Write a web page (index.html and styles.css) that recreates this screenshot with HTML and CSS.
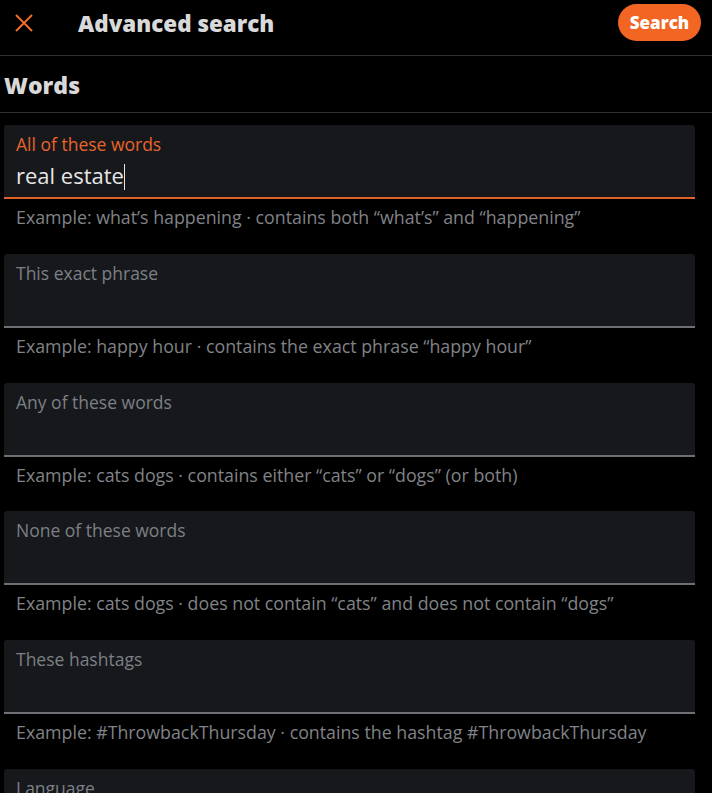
FILE: index.html
```html
<!DOCTYPE html>
<html lang="en">
<head>
    <meta charset="UTF-8">
    <meta name="viewport" content="width=device-width, initial-scale=1.0">
    <title>Advanced search</title>
    <link rel="stylesheet" href="styles.css">
</head>
<body>
<header class="top-bar">
    <button class="close-btn" aria-label="Close">
        <svg width="20" height="20" viewBox="0 0 20 20"><path d="M2 2 L18 18 M18 2 L2 18" stroke="#f26a2e" stroke-width="2" fill="none"/></svg>
    </button>
    <h1 class="title">Advanced search</h1>
    <button class="search-btn">Search</button>
</header>

<h2 class="section-title">Words</h2>

<form class="search-form" onsubmit="event.preventDefault();">
    <div class="field">
        <label class="box active">
            <span class="label">All of these words</span>
            <span class="value">real estate<span class="caret"></span></span>
        </label>
        <p class="hint">Example: what’s happening · contains both “what’s” and “happening”</p>
    </div>

    <div class="field">
        <label class="box">
            <span class="label">This exact phrase</span>
            <input type="text">
        </label>
        <p class="hint">Example: happy hour · contains the exact phrase “happy hour”</p>
    </div>

    <div class="field">
        <label class="box">
            <span class="label">Any of these words</span>
            <input type="text">
        </label>
        <p class="hint">Example: cats dogs · contains either “cats” or “dogs” (or both)</p>
    </div>

    <div class="field">
        <label class="box">
            <span class="label">None of these words</span>
            <input type="text">
        </label>
        <p class="hint">Example: cats dogs · does not contain “cats” and does not contain “dogs”</p>
    </div>

    <div class="field">
        <label class="box">
            <span class="label">These hashtags</span>
            <input type="text">
        </label>
        <p class="hint">Example: #ThrowbackThursday · contains the hashtag #ThrowbackThursday</p>
    </div>

    <div class="field">
        <label class="box">
            <span class="label">Language</span>
            <input type="text">
        </label>
    </div>
</form>
</body>
</html>
```

FILE: styles.css
```css
body {
    margin: 0;
    background: #000;
    color: #e6e6e6;
    font-family: "Open Sans", "Noto Sans", sans-serif;
    overflow: hidden;
}

.top-bar {
    display: flex;
    align-items: center;
    height: 56px;
    border-bottom: 1px solid #2f3033;
    padding: 0 12px 0 12px;
    box-sizing: border-box;
}

.close-btn {
    background: none;
    border: none;
    padding: 0;
    width: 24px;
    height: 24px;
    margin-top: -10px;
    display: flex;
    align-items: center;
    justify-content: center;
    cursor: pointer;
}

.title {
    flex: 1;
    margin: -9px 0 0 42px;
    font-size: 22.4px;
    font-weight: 800;
    color: #d9d9d9;
}

.search-btn {
    background: #f26522;
    color: #fff;
    border: none;
    border-radius: 20px;
    height: 37px;
    width: 83px;
    margin-top: -11px;
    margin-right: -1px;
    font-family: inherit;
    font-size: 17px;
    font-weight: 800;
    cursor: pointer;
}

.section-title {
    margin: 0;
    padding: 13px 4px 0 4px;
    height: 57px;
    box-sizing: border-box;
    border-bottom: 1px solid #2f3033;
    font-size: 23px;
    font-weight: 800;
    color: #d9d9d9;
}

.search-form {
    padding: 12px 17px 0 4px;
}

.field {
    margin-bottom: 24.8px;
}

.box {
    display: block;
    height: 74px;
    background: #16181c;
    border-radius: 3px 3px 0 0;
    border-bottom: 2px solid #6e7075;
    padding: 7px 12px 0 12px;
    box-sizing: border-box;
}

.box.active {
    border-bottom-color: #e0612a;
}

.label {
    display: block;
    font-size: 17.5px;
    color: #7d8085;
    line-height: 24px;
}

.active .label {
    color: #e8642b;
}

.value,
input {
    display: block;
    width: 100%;
    background: none;
    border: none;
    outline: none;
    padding: 0;
    margin-top: 4px;
    font-family: inherit;
    font-size: 22px;
    line-height: 30px;
    color: #e6e6e6;
}

.caret {
    display: inline-block;
    width: 1px;
    height: 26px;
    background: #e6e6e6;
    vertical-align: -6px;
}

.hint {
    margin: 6px 0 0 12px;
    font-size: 17.8px;
    line-height: 24px;
    color: #808387;
}
```
